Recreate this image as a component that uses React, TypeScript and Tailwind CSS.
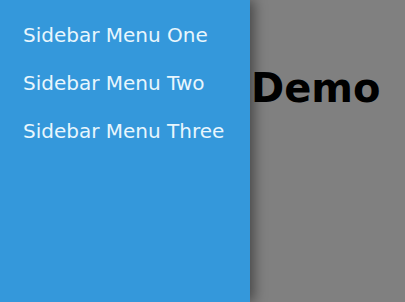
const items = ['Sidebar Menu One', 'Sidebar Menu Two', 'Sidebar Menu Three'];

const App = () => {
  return (
    <div className="flex h-screen w-full overflow-hidden bg-[#808080] font-['DejaVu_Sans',Verdana,sans-serif]">
      <aside className="relative z-10 h-full w-[250px] flex-none bg-[#3498db] shadow-[4px_0_12px_rgba(0,0,0,0.45)]">
        <ul className="pt-[11px]">
          {items.map((item) => (
            <li key={item} className="px-[23px] py-[12px] text-[20px] leading-[24px] text-[#e8f6fd]">
              {item}
            </li>
          ))}
        </ul>
      </aside>
      <main className="flex-1">
        <h1 className="mt-[66px] ml-px text-[40px] font-bold leading-[44px] text-black">Demo</h1>
      </main>
    </div>
  );
};

export default App;
